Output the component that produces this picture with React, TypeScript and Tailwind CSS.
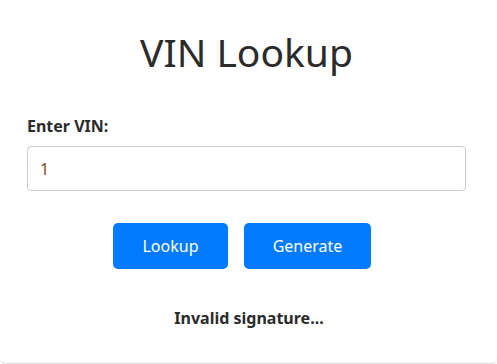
import React from "react";

export default function App() {
  return (
    <div className="w-[497px] h-[364px] overflow-hidden bg-white" style={{ fontFamily: '"Noto Sans", "Open Sans", sans-serif' }}>
      <div className="h-[364px] border-b border-[#dcdcdc] rounded-b-[6px] pl-[27px] pr-[31px] pt-[28px] flex flex-col">
        <h1 className="text-[39px] leading-[48px] font-normal text-center text-[#2b2b2b]">VIN Lookup</h1>
        <label className="mt-[38px] text-[16px] leading-[24px] font-bold text-[#2b2b2b]">Enter VIN:</label>
        <div className="mt-[8px] h-[45px] border border-[#cccccc] rounded-[4px] flex items-center px-[12px] text-[16px] text-[#8a4b14]">
          1
        </div>
        <div className="mt-[32px] flex justify-start pl-[86px] gap-[16px]">
          <button className="w-[115px] h-[46px] rounded-[5px] bg-[#007bff] text-white text-[16px]">Lookup</button>
          <button className="w-[127px] h-[46px] rounded-[5px] bg-[#007bff] text-white text-[16px]">Generate</button>
        </div>
        <div className="mt-[37px] pl-[5px] text-center text-[16px] leading-[24px] font-bold text-[#2b2b2b]">Invalid signature...</div>
      </div>
    </div>
  );
}
